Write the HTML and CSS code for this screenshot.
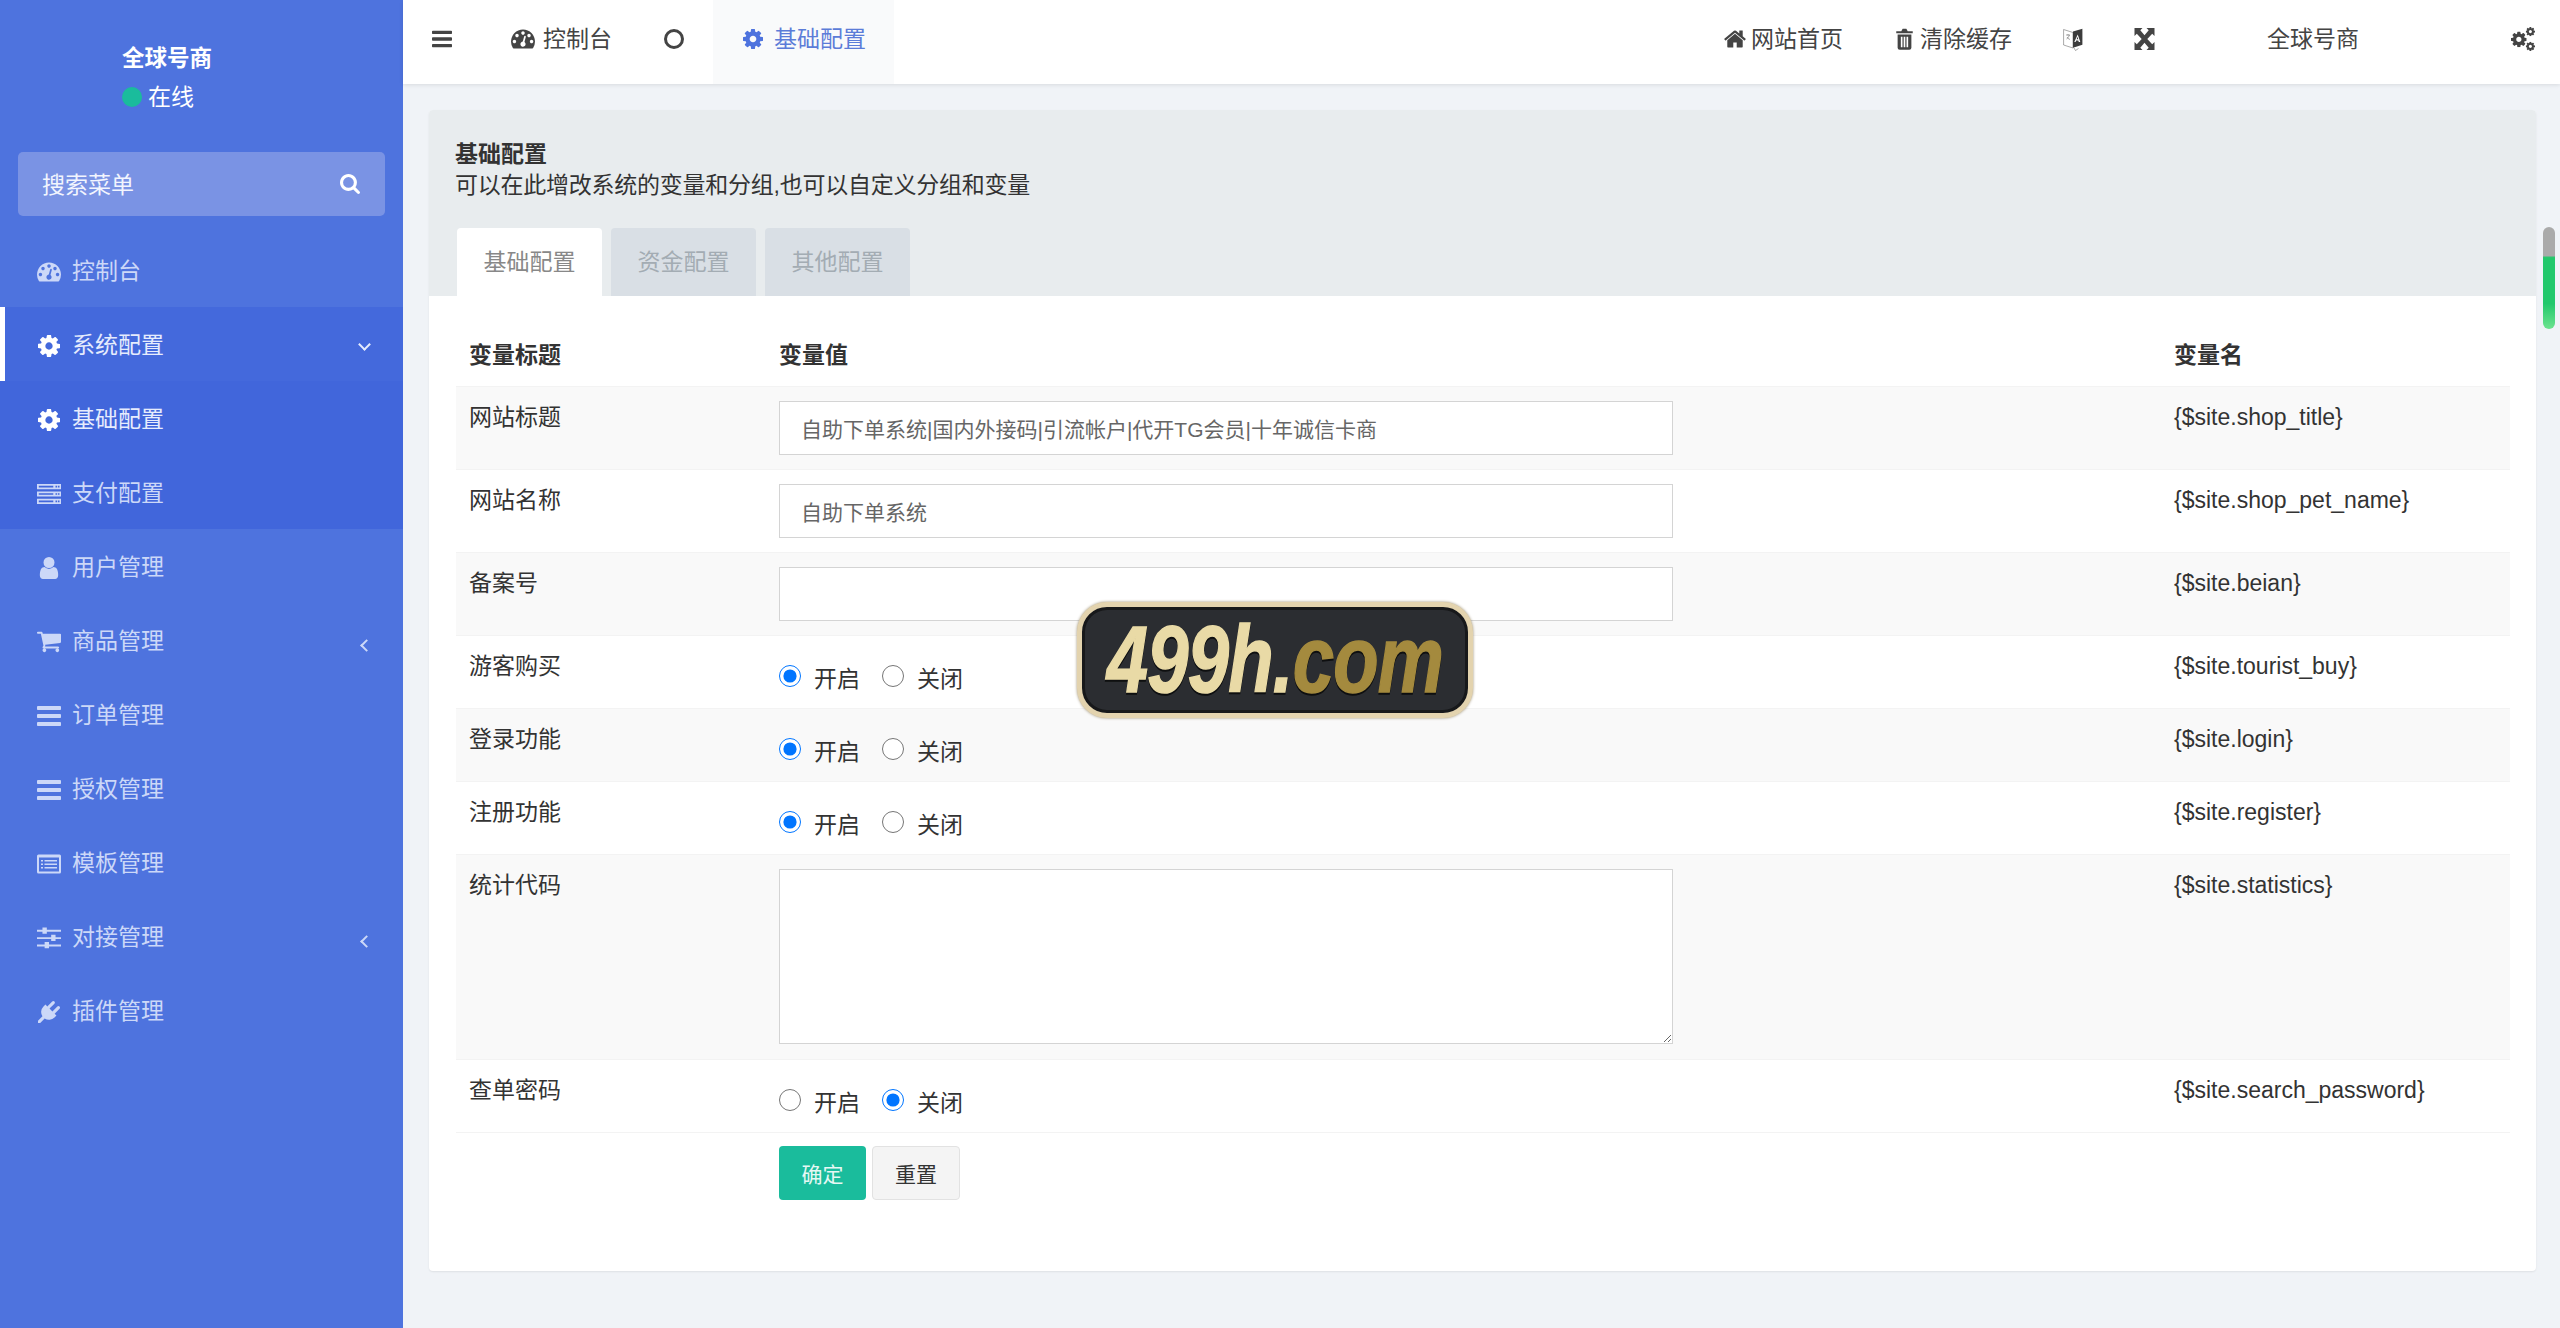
FILE: index.html
```html
<!DOCTYPE html>
<html lang="zh-CN">
<head>
<meta charset="utf-8">
<title>基础配置</title>
<link rel="stylesheet" href="styles.css">
</head>
<body>
<svg class="defs" aria-hidden="true">
  <symbol id="i-bars" viewBox="128 256 1536 1280"><path d="M1664 1344v128q0 26-19 45t-45 19H192q-26 0-45-19t-19-45v-128q0-26 19-45t45-19h1408q26 0 45 19t19 45zm0-512v128q0 26-19 45t-45 19H192q-26 0-45-19t-19-45V832q0-26 19-45t45-19h1408q26 0 45 19t19 45zm0-512v128q0 26-19 45t-45 19H192q-26 0-45-19t-19-45V320q0-26 19-45t45-19h1408q26 0 45 19t19 45z"/></symbol>
  <symbol id="i-cog" viewBox="128 128 1536 1536"><path d="M1152 896q0-106-75-181t-181-75-181 75-75 181 75 181 181 75 181-75 75-181zm512-109v222q0 12-8 23t-20 13l-185 28q-19 54-39 91 35 50 107 138 10 12 10 25t-9 23q-27 37-99 108t-94 71q-12 0-26-9l-138-108q-44 23-91 38-16 136-29 186-7 28-36 28H785q-14 0-24.5-8.5T749 1634l-28-184q-49-16-90-37l-141 107q-10 9-25 9-14 0-25-11-126-114-165-168-7-10-7-23 0-12 8-23 15-21 51-66.5t54-70.5q-27-50-41-99l-183-27q-13-2-21-12.5t-8-23.5V783q0-12 8-23t19-13l186-28q14-46 39-92-40-57-107-138-10-12-10-24 0-10 9-23 26-36 98.5-107.5T465 263q13 0 26 10l138 107q44-23 91-38 16-136 29-186 7-28 36-28h222q14 0 24.5 8.5T1043 158l28 184q49 16 90 37l142-107q9-9 24-9 13 0 25 10 129 119 165 170 7 8 7 22 0 12-8 23-15 21-51 66.5t-54 70.5q26 50 41 98l183 28q13 2 21 12.5t8 23.5z"/></symbol>
  <symbol id="i-search" viewBox="64 128 1664 1664"><path d="M1216 832q0-185-131.5-316.5T768 384 451.5 515.5 320 832t131.5 316.5T768 1280t316.5-131.5T1216 832zm512 832q0 52-38 90t-90 38q-54 0-90-38l-343-342q-179 124-399 124-143 0-273.5-55.5t-225-150-150-225T64 832t55.5-273.5 150-225 225-150T768 128t273.5 55.5 225 150 150 225T1472 832q0 220-124 399l343 343q37 37 37 90z"/></symbol>
  <symbol id="i-user" viewBox="256 128 1280 1536"><path d="M1536 1399q0 109-62.5 187t-150.5 78H469q-88 0-150.5-78T256 1399q0-85 8.5-160.5t31.5-152 58.5-131 94-89T583 832q131 128 313 128t313-128q76 0 134.5 34.5t94 89 58.5 131 31.5 152 8.5 160.5zm-256-887q0 159-112.5 271.5T896 896 624.5 783.5 512 512t112.5-271.5T896 128t271.5 112.5T1280 512z"/></symbol>
  <symbol id="i-home" viewBox="0 128 1792 1536"><path d="M1472 992v480q0 26-19 45t-45 19h-384v-384H768v384H384q-26 0-45-19t-19-45V992q0-1 .5-3t.5-3l575-474 575 474q1 2 1 6zm223-69l-62 74q-8 9-21 11h-3q-13 0-21-7L896 424l-692 577q-12 8-24 7-13-2-21-11l-62-74q-8-10-7-23.5t11-21.5l719-599q32-26 76-26t76 26l244 204V288q0-14 9-23t23-9h192q14 0 23 9t9 23v408l219 182q10 8 11 21.5t-7 23.5z"/></symbol>
  <symbol id="i-trash" viewBox="0 0 18 24"><path fill-rule="evenodd" d="M0 3.500h5.500L7 .8h4l1.500 2.700H18v2.300H0zM1.500 7h15v14.500q0 2.300-2.300 2.300H3.800q-2.300 0-2.300-2.300zM5 9.500v11.500h1.800V9.500zM8.100 9.500v11.500h1.800V9.500zM11.200 9.500v11.500H13V9.500z"/></symbol>
  <symbol id="i-cart" viewBox="64 256 1664 1408"><path d="M704 1536q0 52-38 90t-90 38-90-38-38-90 38-90 90-38 90 38 38 90zm896 0q0 52-38 90t-90 38-90-38-38-90 38-90 90-38 90 38 38 90zm128-1088v512q0 24-16.5 42.5T1671 1024L627 1146q13 60 13 70 0 16-24 64h920q26 0 45 19t19 45-19 45-45 19H512q-26 0-45-19t-19-45q0-11 8-31.5t16-36 21.5-40T509 1207L332 384H128q-26 0-45-19t-19-45 19-45 45-19h256q16 0 28.5 6.5T432 278t13 24.5 8 26 5.5 29.5 4.5 26h1201q26 0 45 19t19 45z"/></symbol>
  <symbol id="i-plug" viewBox="0 0 1792 1792"><path d="M1755 453q37 38 37 90.5t-37 90.5l-401 400 150 150-160 160q-163 163-389.5 186.5T543 1430l-362 362H0v-181l362-362q-124-185-100.5-411.5T448 448l160-160 150 150 400-401q38-37 91-37t90 37 37 90.5-37 90.5L939 619l234 234 401-400q38-37 91-37t90 37z"/></symbol>
  <symbol id="i-gauge" viewBox="0 256 1792 1408"><path d="M384 1152q0-53-37.5-90.5T256 1024t-90.5 37.5T128 1152t37.5 90.5T256 1280t90.5-37.5T384 1152zm192-448q0-53-37.5-90.5T448 576t-90.5 37.5T320 704t37.5 90.5T448 832t90.5-37.5T576 704zm428 481l101-382q6-26-7.5-48.5T1059 725t-48 6.5-30 39.5L880 1153q-60 5-107 43.5t-63 98.5q-20 77 20 146t117 89 146-20 89-117q16-60-6-117t-72-91zm660-33q0-53-37.5-90.5T1536 1024t-90.5 37.5T1408 1152t37.5 90.5 90.5 37.5 90.5-37.5 37.5-90.5zm-640-640q0-53-37.5-90.5T896 384t-90.5 37.5T768 512t37.5 90.5T896 640t90.5-37.5T1024 512zm448 192q0-53-37.5-90.5T1344 576t-90.5 37.5T1216 704t37.5 90.5T1344 832t90.5-37.5T1472 704zm320 448q0 261-141 483-19 29-54 29H195q-35 0-54-29Q0 1414 0 1152q0-182 71-348t191-286 286-191 348-71 348 71 286 191 191 286 71 348z"/></symbol>
  <symbol id="i-list" viewBox="0 0 24 19"><path fill-rule="evenodd" d="M1.500 0h21Q24 0 24 1.500v16q0 1.500-1.500 1.500h-21Q0 19 0 17.500v-16Q0 0 1.500 0zM2 3v14h20V3zM4 5.500h2v1.500H4zM7.500 5.500H20v1.500H7.500zM4 9h2v1.500H4zM7.500 9H20v1.500H7.500zM4 12.500h2V14H4zM7.500 12.500H20V14H7.500z"/></symbol>
  <symbol id="i-server" viewBox="0 0 24 20"><path fill-rule="evenodd" d="M0 0h24v5.200H0zM1.800 1.800v1.600h14.500V1.800zM18.500 1.800v1.600h1.700V1.800zM21 1.800v1.600h1.500V1.800zM0 7.400h24v5.200H0zM1.800 9.200v1.600h14.500V9.200zM18.500 9.200v1.600h1.700V9.200zM21 9.200v1.600h1.500V9.200zM0 14.800h24V20H0zM1.800 16.600v1.600h14.500v-1.600zM18.500 16.600v1.600h1.700v-1.600zM21 16.600v1.600h1.500v-1.600z"/></symbol>
  <symbol id="i-sliders" viewBox="0 0 22 20"><path d="M0 2.500h22v1.800H0zM0 9.200h22v1.800H0zM0 15.900h22v1.800H0z"/><path d="M5 .4h4v5.800H5zM13 7h4v5.800h-4zM7 13.700h4v5.800H7z"/></symbol>
  <symbol id="i-expand" viewBox="0 0 20 22"><path d="M0 0h8L5.800 2.200l4.200 5 4.200-5L12 0h8v8l-2.300-2.200-4.900 5.200 4.900 5.200L20 14v8h-8l2.200-2.200-4.200-5-4.200 5L8 22H0v-8l2.300 2.200L7.200 11 2.300 5.800 0 8z"/></symbol>
  <symbol id="i-translate" viewBox="0 0 20 24"><path class="page" d="M.6 2.500l9.400 3v15.500l-9.400-3z"/><path d="M10 4.500l9.400-2.800v16l-9.400 3z"/><path class="cut-w" d="M14.700 7.500l2.600 7.500h-1.500l-.5-1.600h-2.200l-.5 1.600h-1.300zM14.500 9.700l-.8 2.600h1.600z"/><path class="page" d="M3 8h4M5 7v1.500M3.500 12q2-1 3-4M4 10q1 2 3 2.500"/><path class="page" d="M11 21l1.500 2.500 3-2"/></symbol>
  <symbol id="i-cogs" viewBox="0 0 26 26"><use href="#i-cog" x="0" y="5" width="17" height="17"/><use href="#i-cog" x="16" y="0" width="10" height="10"/><use href="#i-cog" x="16" y="16" width="10" height="10"/></symbol>
</svg>

<div class="app">
  <aside class="sidebar">
    <div class="user-panel">
      <div class="user-name">全球号商</div>
      <div class="user-status"><span class="status-dot"></span>在线</div>
    </div>
    <div class="search-box">
      <span>搜索菜单</span>
      <svg class="search-icon"><use href="#i-search"/></svg>
    </div>
    <nav class="menu">
      <a class="menu-item"><svg class="ico"><use href="#i-gauge"/></svg>控制台</a>
      <a class="menu-item is-open"><svg class="ico"><use href="#i-cog"/></svg>系统配置<span class="chev chev-down"></span></a>
      <div class="submenu">
        <a class="menu-item is-current"><svg class="ico"><use href="#i-cog"/></svg>基础配置</a>
        <a class="menu-item"><svg class="ico"><use href="#i-server"/></svg>支付配置</a>
      </div>
      <a class="menu-item"><svg class="ico"><use href="#i-user"/></svg>用户管理</a>
      <a class="menu-item"><svg class="ico"><use href="#i-cart"/></svg>商品管理<span class="chev chev-left"></span></a>
      <a class="menu-item"><svg class="ico"><use href="#i-bars"/></svg>订单管理</a>
      <a class="menu-item"><svg class="ico"><use href="#i-bars"/></svg>授权管理</a>
      <a class="menu-item"><svg class="ico"><use href="#i-list"/></svg>模板管理</a>
      <a class="menu-item"><svg class="ico"><use href="#i-sliders"/></svg>对接管理<span class="chev chev-left"></span></a>
      <a class="menu-item"><svg class="ico"><use href="#i-plug"/></svg>插件管理</a>
    </nav>
  </aside>

  <div class="main">
    <header class="topbar">
      <a class="bar-btn bars"><svg class="top-ico"><use href="#i-bars"/></svg></a>
      <a class="bar-btn dash"><svg class="top-ico"><use href="#i-gauge"/></svg>控制台</a>
      <span class="ring"></span>
      <a class="bar-btn tab-on"><svg class="top-ico"><use href="#i-cog"/></svg>基础配置</a>
      <div class="bar-right">
        <a class="bar-btn home"><svg class="top-ico"><use href="#i-home"/></svg>网站首页</a>
        <a class="bar-btn trash"><svg class="top-ico trash-ico"><use href="#i-trash"/></svg>清除缓存</a>
        <a class="bar-btn trans"><svg class="trans-ico"><use href="#i-translate"/></svg></a>
        <a class="bar-btn expand"><svg class="expand-ico"><use href="#i-expand"/></svg></a>
        <a class="bar-btn account">全球号商</a>
        <a class="bar-btn gear"><svg class="cogs-ico"><use href="#i-cogs"/></svg></a>
      </div>
    </header>

    <main class="content">
      <section class="card">
        <div class="card-head">
          <div class="card-title">基础配置</div>
          <div class="card-sub">可以在此增改系统的变量和分组,也可以自定义分组和变量</div>
          <div class="tabs">
            <a class="tab tab-active">基础配置</a>
            <a class="tab">资金配置</a>
            <a class="tab">其他配置</a>
          </div>
        </div>
        <div class="card-body">
          <table class="cfg">
            <colgroup><col class="c1"><col class="c2"><col class="c3"></colgroup>
            <thead><tr><th>变量标题</th><th>变量值</th><th>变量名</th></tr></thead>
            <tbody>
              <tr class="odd"><td>网站标题</td><td class="val"><input class="field" value="自助下单系统|国内外接码|引流帐户|代开TG会员|十年诚信卡商"></td><td>{$site.shop_title}</td></tr>
              <tr><td>网站名称</td><td class="val"><input class="field" value="自助下单系统"></td><td>{$site.shop_pet_name}</td></tr>
              <tr class="odd"><td>备案号</td><td class="val"><input class="field" value=""></td><td>{$site.beian}</td></tr>
              <tr><td>游客购买</td><td class="val"><div class="radios"><label><input type="radio" name="r1" checked>开启</label><label><input type="radio" name="r1">关闭</label></div></td><td>{$site.tourist_buy}</td></tr>
              <tr class="odd"><td>登录功能</td><td class="val"><div class="radios"><label><input type="radio" name="r2" checked>开启</label><label><input type="radio" name="r2">关闭</label></div></td><td>{$site.login}</td></tr>
              <tr><td>注册功能</td><td class="val"><div class="radios"><label><input type="radio" name="r3" checked>开启</label><label><input type="radio" name="r3">关闭</label></div></td><td>{$site.register}</td></tr>
              <tr class="odd"><td>统计代码</td><td class="val"><textarea class="field area"></textarea></td><td>{$site.statistics}</td></tr>
              <tr class="last"><td>查单密码</td><td class="val"><div class="radios"><label><input type="radio" name="r4">开启</label><label><input type="radio" name="r4" checked>关闭</label></div></td><td>{$site.search_password}</td></tr>
            </tbody>
          </table>
          <div class="actions">
            <button class="btn btn-ok">确定</button>
            <button class="btn btn-reset">重置</button>
          </div>
        </div>
      </section>
    </main>
  </div>
</div>

<div class="watermark"><span class="wm-text"><span class="wm-a">499h.</span><span class="wm-b">com</span></span></div>
<div class="scroll-thumb"></div>
</body>
</html>
```

FILE: styles.css
```css
* { box-sizing: border-box; }
html, body { margin: 0; padding: 0; height: 100%; overflow: hidden; }
body {
  font-family: "Liberation Sans", "Noto Sans CJK SC", sans-serif;
  font-size: 23px;
  color: #333;
  background: #f0f3f7;
}
.defs { width: 0; height: 0; position: absolute; }
.cut-w { fill: #fff; }
.page { fill: #fff; stroke: #555; stroke-width: .5; }
a { color: inherit; text-decoration: none; }

.app { display: flex; height: 1328px; }

/* sidebar */
.sidebar { width: 403px; flex: none; background: #4e73de; color: #ccd8f8; }
.user-panel { height: 152px; padding: 40px 0 0 122px; color: #fff; line-height: 38px; }
.user-name { font-weight: 700; font-size: 22.5px; }
.user-status { display: flex; align-items: center; gap: 6px; }
.status-dot { width: 20px; height: 20px; border-radius: 50%; background: #1abc9c; }
.search-box {
  margin: 0 18px; height: 64px; padding: 0 25px 2px 24px;
  display: flex; align-items: center; justify-content: space-between;
  background: #7a93e4; border-radius: 5px; color: #f2f5fe;
}
.search-icon { width: 20px; height: 20px; fill: #fff; margin-top: 2px; }
.menu { margin-top: 17px; }
.menu-item {
  position: relative; display: flex; align-items: center;
  height: 74px; padding: 3px 0 0 37px; line-height: 1;
}
.ico { width: 24px; height: 22px; fill: #ccd8f8; margin-right: 11px; flex: none; }
.submenu { background: #4166db; }
.is-open { background: #4469dc; color: #e6ecfd; border-left: 5px solid #fff; padding-left: 32px; }
.is-open .ico, .is-current .ico { fill: #fff; }
.is-current { color: #e6ecfd; }
.chev { position: absolute; width: 9px; height: 9px; border-left: 2.500px solid #ccd8f8; border-bottom: 2.500px solid #ccd8f8; }
.chev-left { left: 362px; top: 38px; transform: rotate(45deg); }
.chev-down { left: 355px; top: 33px; transform: rotate(-45deg); border-color: #e6ecfd; }

/* topbar */
.main { flex: 1; min-width: 0; display: flex; flex-direction: column; }
.topbar {
  height: 84px; flex: none; background: #fff; color: #444;
  display: flex; align-items: center;
  box-shadow: 0 1px 4px rgba(0, 0, 0, .1);
  position: relative;
}
.bar-btn { display: flex; align-items: center; height: 84px; padding-bottom: 6px; line-height: 1; }
.top-ico { width: 24px; height: 22px; fill: #444; margin-right: 8px; flex: none; }
.bars { margin-left: 29px; }
.bars .top-ico { width: 20px; margin: 0; }
.dash { margin-left: 59px; }
.ring { width: 20px; height: 20px; border: 3px solid #444; border-radius: 50%; margin: 0 0 6px 52px; }
.tab-on { margin-left: 29px; width: 181px; padding-left: 30px; background: #f9fafb; color: #5c7cd8; }
.tab-on .top-ico { fill: #4e73de; width: 20px; margin-right: 11px; }
.bar-right { margin-left: auto; display: flex; align-items: center; }
.home .top-ico { width: 24px; margin-right: 4px; }
.trash { margin-left: 53px; }
.trash .trash-ico { width: 17px; margin-right: 7px; }
.trans { margin-left: 51px; }
.trans-ico { width: 20px; height: 24px; fill: #3c3c3c; }
.expand { margin-left: 51px; }
.expand-ico { width: 21px; height: 22px; fill: #444; }
.account { margin-left: 112px; }
.gear { margin-left: 152px; margin-right: 25px; }
.cogs-ico { width: 24px; height: 24px; fill: #444; }

/* content */
.content { padding: 26px 24px 0 26px; }
.card { background: #fff; border-radius: 4px; box-shadow: 0 1px 2px rgba(0, 0, 0, .08); height: 1161px; }
.card-head { background: #e8ecee; height: 186px; padding: 26px 0 0 26px; border-radius: 4px 4px 0 0; }
.card-title { font-weight: 700; line-height: 30px; margin-top: 3px; }
.card-sub { line-height: 32px; letter-spacing: -.25px; }
.tabs { display: flex; gap: 9px; margin: 27px 0 0 2px; }
.tab {
  width: 145px; height: 68px; line-height: 68px; text-align: center;
  background: #d9dfe5; color: #a3acb3; border-radius: 4px 4px 0 0;
}
.tab-active { background: #fff; color: #888; }
.card-body { padding: 30px 26px 0 27px; }
.cfg { width: 100%; border-collapse: collapse; table-layout: fixed; }
.c1 { width: 310px; }
.c2 { width: 1395px; }
.cfg th { text-align: left; padding: 0 13px 6px; height: 60px; font-weight: 700; }
.cfg td { padding: 11px 13px 0; vertical-align: top; line-height: 38px; border-top: 1px solid #f3f3f3; }
.cfg td.val { padding-top: 14px; }
.cfg tbody tr { height: 73px; }
.cfg .odd { background: #f9f9f9; }
.cfg .last { border-bottom: 1px solid #f3f3f3; }
.field {
  display: block; width: 894px; height: 54px; padding: 0 21px;
  border: 1px solid #d4d4d4; background: #fff; color: #666;
  font: 21px "Liberation Sans", "Noto Sans CJK SC", sans-serif;
  margin-bottom: 14px;
  outline: none;
}
.area { height: 175px; resize: both; margin-bottom: 15px; }
.radios { display: flex; gap: 22px; padding-top: 7px; }
.radios label { display: flex; align-items: flex-start; line-height: 44px; height: 44px; }
.radios input { width: 22px; height: 22px; margin: 8px 13px 0 0; accent-color: #0075ff; }
.actions { display: flex; gap: 6px; margin: 13px 0 0 310px; padding-left: 13px; }
.btn {
  height: 54px; width: 87px; border-radius: 4px;
  font: 21px "Liberation Sans", "Noto Sans CJK SC", sans-serif;
}
.btn-ok { background: #1abc9c; border: 0; color: #e6f8f4; }
.btn-reset { width: 88px; background: #f4f4f4; border: 1px solid #e2e2e2; color: #333; }

/* overlays */
.watermark {
  position: absolute; left: 1077px; top: 602px; width: 396px; height: 116px;
  display: flex; align-items: center; justify-content: center;
  background: #2b2d31; border: 5px solid #e3d3ae; border-radius: 30px;
  box-shadow: inset 0 0 0 3px #17181a, 0 0 3px #9c8e70;
}
.wm-text {
  display: inline-block; white-space: nowrap; transform: scaleX(.79);
  font: italic 700 94px/1 "Liberation Sans", sans-serif;
  letter-spacing: -1px;
  -webkit-text-stroke: 1.500px currentColor;
  filter: drop-shadow(0 2px 0 #0e0f10);
}
.wm-a { color: #e9daa6; }
.wm-b { color: #a48a3e; }
.scroll-thumb {
  position: absolute; left: 2543px; top: 227px; width: 12px; height: 102px;
  border-radius: 6px;
  background: linear-gradient(#aaa 0 28%, #22c86b 30% 75%, #6de38f 100%);
}
```
